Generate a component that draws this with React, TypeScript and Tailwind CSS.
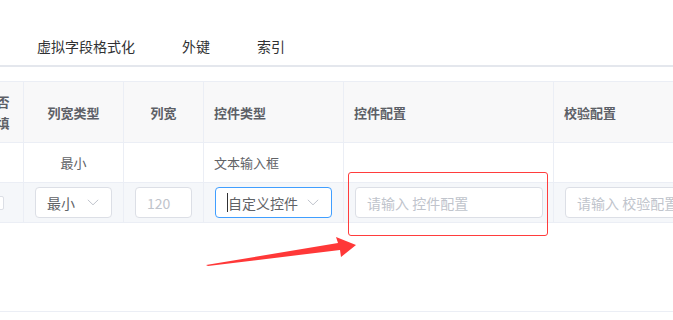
const font = { fontFamily: '"Microsoft YaHei", "Noto Sans CJK SC", "Noto Sans", sans-serif' };

const cols = [
    { title: "是否必填", w: "w-[54px]", align: "text-center" },
    { title: "列宽类型", w: "w-[100px]", align: "text-center" },
    { title: "列宽", w: "w-[80px]", align: "text-center" },
    { title: "控件类型", w: "w-[140px]", align: "text-left" },
    { title: "控件配置", w: "w-[210px]", align: "text-left" },
    { title: "校验配置", w: "w-[200px]", align: "text-left" },
];

const Chevron = () => (
    <svg width="12" height="7" viewBox="0 0 12 7" className="shrink-0">
        <path d="M0.8 0.8 L6 5.8 L11.2 0.8" fill="none" stroke="#c0c4cc" strokeWidth="1" />
    </svg>
);

const Select = ({ value, focused }: { value: string; focused?: boolean }) => (
    <div
        className={`h-[31px] w-full rounded-[4px] border bg-white flex items-center pl-[11px] pr-[12px] text-[14px] text-[#606266] ${focused ? "border-[#409eff]" : "border-[#dcdfe6]"}`}
    >
        {focused && <span className="w-px h-[19px] bg-[#303133]" />}
        <span className="flex-1 leading-[20px]">{value}</span>
        <Chevron />
    </div>
);

const Input = ({ placeholder }: { placeholder: string }) => (
    <div className="h-[31px] w-full rounded-[4px] border border-[#dcdfe6] bg-white flex items-center px-[11px] text-[14px] leading-[20px] text-[#c0c4cc] whitespace-nowrap overflow-hidden">
        {placeholder}
    </div>
);

const App = () => {
    const tabs = ["虚拟字段格式化", "外键", "索引"];
    return (
        <div className="relative w-[673px] h-[320px] overflow-hidden bg-white" style={font}>
            <div className="h-[67px] border-b-2 border-[#e4e7ed] flex items-start pt-[36px] pl-[37px] gap-[47px]">
                {tabs.map((t) => (
                    <span key={t} className="text-[14px] leading-[20px] text-[#303133]">
                        {t}
                    </span>
                ))}
            </div>

            <div className="mt-[14px] h-[231px] border-b border-[#ebeef5]">
                <div className="ml-[-30px] w-[784px] border-t border-[#ebeef5]">
                    <div className="flex bg-[#f8f8f9] border-b border-[#ebeef5]">
                        {cols.map((c) => (
                            <div
                                key={c.title}
                                className={`${c.w} shrink-0 border-r border-[#ebeef5] py-[9px] px-[10px] text-[13px] leading-[21px] font-bold text-[#5c5f66] flex items-center ${c.align === "text-center" ? "justify-center text-center" : "justify-start"}`}
                            >
                                {c.title}
                            </div>
                        ))}
                    </div>

                    <div className="flex bg-white border-b border-[#ebeef5] text-[13px] leading-[21px] text-[#606266]">
                        <div className="w-[54px] shrink-0 border-r border-[#ebeef5] py-[9px]" />
                        <div className="w-[100px] shrink-0 border-r border-[#ebeef5] py-[9px] text-center">最小</div>
                        <div className="w-[80px] shrink-0 border-r border-[#ebeef5] py-[9px]" />
                        <div className="w-[140px] shrink-0 border-r border-[#ebeef5] py-[9px] px-[10px]">文本输入框</div>
                        <div className="w-[210px] shrink-0 border-r border-[#ebeef5] py-[9px]" />
                        <div className="w-[200px] shrink-0 border-r border-[#ebeef5] py-[9px]" />
                    </div>

                    <div className="flex bg-[#f5f7fa] border-b border-[#ebeef5]">
                        <div className="w-[54px] shrink-0 border-r border-[#ebeef5] py-[4px] flex items-center justify-center">
                            <span className="w-[14px] h-[14px] rounded-[2px] border border-[#dcdfe6] bg-white" />
                        </div>
                        <div className="w-[100px] shrink-0 border-r border-[#ebeef5] py-[4px] pl-[11px] pr-[11px]">
                            <Select value="最小" />
                        </div>
                        <div className="w-[80px] shrink-0 border-r border-[#ebeef5] py-[4px] pl-[11px] pr-[11px]">
                            <Input placeholder="120" />
                        </div>
                        <div className="w-[140px] shrink-0 border-r border-[#ebeef5] py-[4px] pl-[11px] pr-[11px]">
                            <Select value="自定义控件" focused />
                        </div>
                        <div className="w-[210px] shrink-0 border-r border-[#ebeef5] py-[4px] pl-[11px] pr-[10px]">
                            <Input placeholder="请输入 控件配置" />
                        </div>
                        <div className="w-[200px] shrink-0 border-r border-[#ebeef5] py-[4px] pl-[11px] pr-[10px]">
                            <Input placeholder="请输入 校验配置" />
                        </div>
                    </div>
                </div>
            </div>

            <div className="absolute left-[348px] top-[172px] w-[200px] h-[64px] rounded-[3px] border-[1.5px] border-[#ff3d3d]" />

            <svg className="absolute left-0 top-0" width="673" height="320" viewBox="0 0 673 320">
                <polygon
                    points="206,265 338,243 336,237 356,245 341,257 340,250 208,266"
                    fill="#ff3838"
                />
            </svg>
        </div>
    );
};

export default App;
